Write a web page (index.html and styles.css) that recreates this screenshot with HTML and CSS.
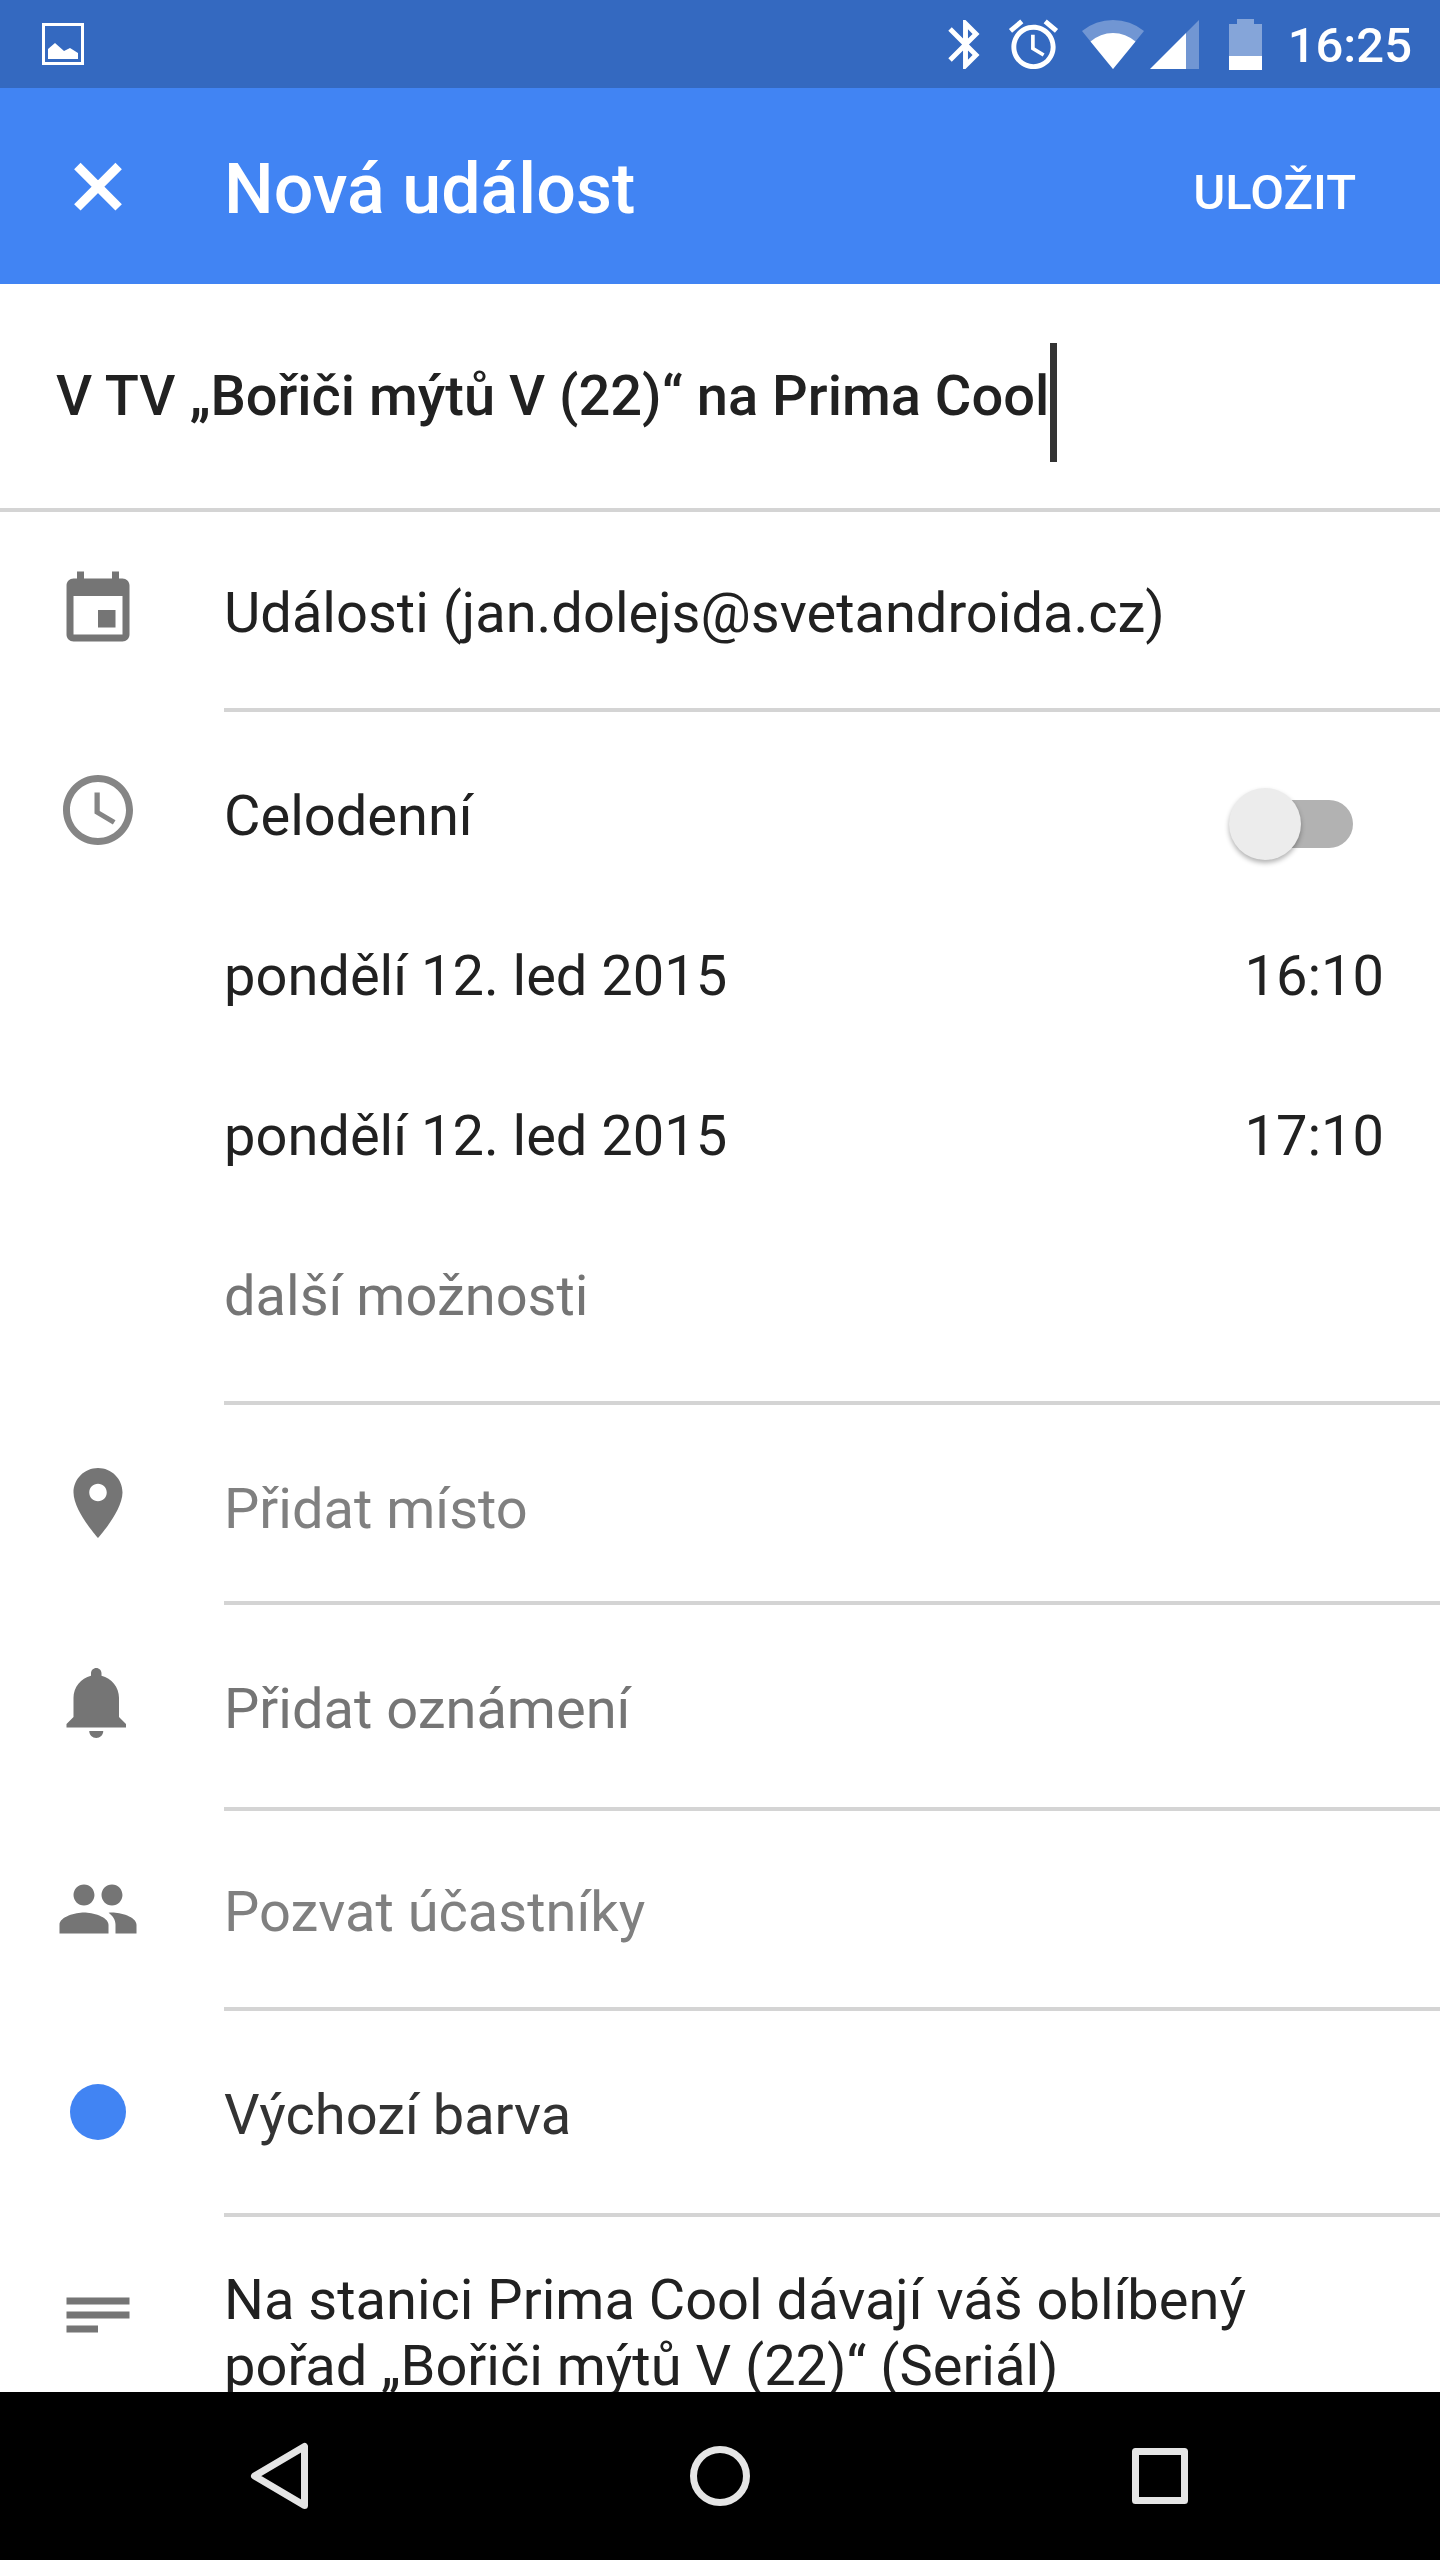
FILE: index.html
```html
<!DOCTYPE html>
<html lang="cs">
<head>
<meta charset="utf-8">
<meta name="viewport" content="width=device-width, initial-scale=1">
<title>Nová událost</title>
<link rel="stylesheet" href="styles.css">
</head>
<body>
<div class="status-bar">
  <svg class="status-picture" viewBox="0 0 42 42" aria-hidden="true"><rect x="1.5" y="1.5" width="39" height="39" fill="none" stroke="#fff" stroke-width="3"/><path fill="#fff" d="M6 26l7-6 9 8 6-3 8 5v6H6z"/></svg>
  <svg class="status-glyph" viewBox="0 0 24 24" aria-hidden="true"><path fill="#fff" d="M17.71 7.71L12 2h-1v7.59L6.41 5 5 6.41 10.59 12 5 17.59 6.41 19 11 14.41V22h1l5.71-5.71-4.3-4.29 4.3-4.29zM13 5.83l1.88 1.88L13 9.59V5.83zm1.88 10.46L13 18.17v-3.76l1.88 1.88z"/></svg>
  <svg class="status-glyph status-alarm" viewBox="0 0 24 24" aria-hidden="true"><path fill="#fff" d="M22 5.72l-4.6-3.86-1.29 1.53 4.6 3.86L22 5.72zM7.88 3.39L6.6 1.86 2 5.71l1.29 1.53 4.59-3.85zM12.5 8H11v6l4.75 2.85.75-1.23-4-2.37V8zM12 4c-4.97 0-9 4.03-9 9s4.02 9 9 9c4.97 0 9-4.03 9-9s-4.03-9-9-9zm0 16c-3.87 0-7-3.13-7-7s3.13-7 7-7 7 3.13 7 7-3.13 7-7 7z"/></svg>
  <svg class="status-wifi" viewBox="0 0 62 50" aria-hidden="true"><path fill="#fff" fill-opacity=".3" d="M31 50L0 12A49 49 0 0 1 62 12z"/><path fill="#fff" d="M31 50L8.500 22.500A34 34 0 0 1 53.500 22.500z"/></svg>
  <svg class="status-signal" viewBox="0 0 49 50" aria-hidden="true"><path fill="#fff" fill-opacity=".3" d="M36 14L49 1v49H36z"/><path fill="#fff" d="M0 50L36 14v36z"/></svg>
  <svg class="status-battery" viewBox="0 0 33 51" aria-hidden="true"><path fill="#fff" fill-opacity=".4" d="M0 5h8V0h17v5h8v32H0z"/><path fill="#fff" d="M0 37h33v14H0z"/></svg>
  <time class="status-time">16:25</time>
</div>

<header class="app-bar">
  <button class="close" type="button" aria-label="Zavřít"><svg class="icon" viewBox="0 0 24 24"><path stroke="#fff" stroke-width="2.6" d="M6.100 6.300l11.800 11.800M17.900 6.300L6.100 18.100"/></svg></button>
  <h1 class="app-title">Nová událost</h1>
  <button class="save" type="submit" form="event">ULOŽIT</button>
</header>

<form class="event" id="event">
  <div class="name-row">
    <input class="name" type="text" aria-label="Název události" value="V TV „Bořiči mýtů V (22)“ na Prima Cool" size="36">
    <span class="caret"></span>
  </div>

  <div class="row">
    <svg class="icon" viewBox="0 0 24 24" aria-hidden="true"><path d="M17 12h-5v5h5v-5zM16 1v2H8V1H6v2H5c-1.11 0-1.99.9-1.99 2L3 19c0 1.1.89 2 2 2h14c1.1 0 2-.9 2-2V5c0-1.1-.9-2-2-2h-1V1h-2zm3 18H5V8h14v11z"/></svg>
    <div class="cell"><button class="field" type="button">Události (jan.dolejs@svetandroida.cz)</button></div>
  </div>

  <div class="row">
    <svg class="icon icon-time" viewBox="0 0 24 24" aria-hidden="true"><path d="M12 2C6.480 2 2 6.480 2 12s4.480 10 10 10 10-4.480 10-10S17.520 2 12 2zm0 18c-4.420 0-8-3.580-8-8s3.580-8 8-8 8 3.580 8 8-3.580 8-8 8zM12.500 7H11v6l5.250 3.150.75-1.230-4.500-2.670z"/></svg>
    <div class="cell times">
      <div class="line"><label for="all-day">Celodenní</label><input class="switch" id="all-day" type="checkbox" role="switch"></div>
      <div class="line"><button class="field" type="button">pondělí 12. led 2015</button><button class="field hour" type="button">16:10</button></div>
      <div class="line"><button class="field" type="button">pondělí 12. led 2015</button><button class="field hour" type="button">17:10</button></div>
      <div class="line"><button class="field muted" type="button">další možnosti</button></div>
    </div>
  </div>

  <div class="row">
    <svg class="icon" viewBox="0 0 24 24" aria-hidden="true"><path d="M12 2C8.130 2 5 5.130 5 9c0 5.250 7 13 7 13s7-7.750 7-13c0-3.870-3.130-7-7-7zm0 9.500c-1.380 0-2.500-1.120-2.500-2.500s1.120-2.500 2.500-2.500 2.500 1.120 2.500 2.500-1.120 2.500-2.500 2.500z"/></svg>
    <div class="cell place"><input class="field" type="text" aria-label="Místo" placeholder="Přidat místo"></div>
  </div>

  <div class="row tall">
    <svg class="icon" viewBox="0 0 24 24" aria-hidden="true"><path d="M11.500 22c1.100 0 2-.9 2-2h-4c0 1.100.9 2 2 2zm6.500-6v-5.500c0-3.070-2.130-5.640-5-6.320V3.500c0-.83-.67-1.500-1.500-1.500S10 2.670 10 3.500v.68c-2.870.68-5 3.250-5 6.320V16l-2 2v1h17v-1l-2-2z"/></svg>
    <div class="cell"><button class="field muted" type="button">Přidat oznámení</button></div>
  </div>

  <div class="row">
    <svg class="icon" viewBox="0 0 24 24" aria-hidden="true"><path d="M16 11c1.660 0 2.990-1.340 2.990-3S17.660 5 16 5c-1.660 0-3 1.340-3 3s1.340 3 3 3zm-8 0c1.660 0 2.990-1.340 2.990-3S9.660 5 8 5C6.340 5 5 6.340 5 8s1.340 3 3 3zm0 2c-2.330 0-7 1.170-7 3.500V19h14v-2.500c0-2.330-4.670-3.500-7-3.500zm8 0c-.29 0-.62.02-.97.05 1.160.84 1.970 1.970 1.970 3.450V19h6v-2.500c0-2.330-4.670-3.500-7-3.500z"/></svg>
    <div class="cell"><input class="field" type="text" aria-label="Účastníci" placeholder="Pozvat účastníky"></div>
  </div>

  <div class="row tall">
    <span class="swatch"></span>
    <div class="cell"><button class="field color-name" type="button">Výchozí barva</button></div>
  </div>

  <div class="row">
    <svg class="icon" viewBox="0 0 24 24" aria-hidden="true"><path d="M3 7h18v2H3zM3 11h18v2H3zM3 15h9v2H3z"/></svg>
    <div class="cell notes"><textarea class="field" rows="2" aria-label="Popis">Na stanici Prima Cool dávají váš oblíbený pořad „Bořiči mýtů V (22)“ (Seriál)</textarea></div>
  </div>
</form>

<nav class="nav-bar">
  <button type="button" aria-label="Zpět"><svg viewBox="0 0 84 84"><path d="M66.500 12.500v59L16.500 42z"/></svg></button>
  <button type="button" aria-label="Domů"><svg viewBox="0 0 84 84"><circle cx="42" cy="42" r="26.500"/></svg></button>
  <button type="button" aria-label="Přehled"><svg viewBox="0 0 84 84"><rect x="17.500" y="17.500" width="49" height="49"/></svg></button>
</nav>
</body>
</html>
```
FILE: styles.css
```css
* {
  box-sizing: border-box;
}

body {
  display: flex;
  flex-direction: column;
  height: 100vh;
  margin: 0;
  background: #fff;
  color: #212121;
  font: 400 56px/66px Roboto, sans-serif;
}

button,
input,
textarea {
  margin: 0;
  padding: 0;
  border: 0;
  outline: 0;
  background: none;
  color: inherit;
  font: inherit;
  text-align: left;
}

svg {
  display: block;
  flex: none;
}

/* System status bar */
.status-bar {
  display: flex;
  flex: none;
  align-items: center;
  height: 88px;
  padding: 0 28px 0 42px;
  background: #3469c0;
  color: #fff;
}

.status-picture {
  width: 42px;
  height: 42px;
  margin-right: auto;
}

.status-glyph {
  width: 59px;
  height: 59px;
}

.status-alarm {
  margin-left: 9px;
}

.status-wifi {
  width: 62px;
  height: 50px;
  margin-left: 19px;
}

.status-signal {
  width: 49px;
  height: 50px;
  margin-left: 6px;
}

.status-battery {
  width: 33px;
  height: 51px;
  margin: 0 26px 0 30px;
}

.status-time {
  padding-top: 4px;
  font-size: 49px;
  font-weight: 500;
  line-height: 58px;
}

/* Title bar */
.app-bar {
  display: flex;
  flex: none;
  align-items: center;
  height: 196px;
  padding: 0 84px 0 56px;
  background: #4184f3;
  color: #fff;
}

.app-title {
  flex: 1;
  margin: 0;
  padding: 6px 0 0 84px;
  font-size: 70px;
  font-weight: 500;
  line-height: 82px;
}

.save {
  padding-top: 14px;
  font-size: 49px;
  font-weight: 500;
  line-height: 58px;
}

.icon {
  width: 84px;
  height: 84px;
  fill: #757575;
}

.icon-time {
  fill: #858585;
}

/* Event form */
.event {
  flex: 1;
  min-height: 0;
  overflow: auto;
  scrollbar-width: none;
}

.name-row {
  display: flex;
  align-items: center;
  height: 228px;
  padding: 0 56px;
  border-bottom: 4px solid #d4d4d4;
}

.name {
  min-width: 0;
  font-weight: 500;
  field-sizing: content;
}

.caret {
  width: 7px;
  height: 119px;
  margin: 13px 0 0 1px;
  background: #333;
}

.row {
  display: flex;
}

.row > .icon {
  margin: 56px 84px 0 56px;
}

.cell {
  flex: 1;
  min-width: 0;
  padding: 68px 56px 62px 0;
  border-bottom: 4px solid #d4d4d4;
}

.tall > .cell {
  padding: 71px 56px 65px 0;
}

.row > .place {
  padding: 71px 56px 59px 0;
}

.field {
  display: block;
  height: 66px;
}

input.field,
textarea.field {
  width: 100%;
}

.field::placeholder {
  color: #808080;
  opacity: 1;
}

.muted {
  color: #757575;
}

.color-name {
  color: #333;
}

.row > .times {
  padding: 24px 56px 25px 0;
}

.line {
  display: flex;
  align-items: center;
  justify-content: space-between;
  height: 160px;
}

.switch {
  display: flex;
  align-items: center;
  appearance: none;
  width: 124px;
  height: 72px;
  margin: 16px 31px 0 0;
}

/* Thumb */
.switch::before {
  content: "";
  flex: none;
  width: 72px;
  height: 72px;
  border-radius: 50%;
  background: #ececec;
  box-shadow: 0 3px 5px rgba(0, 0, 0, .3);
  z-index: 1;
}

/* Track */
.switch::after {
  content: "";
  flex: none;
  width: 100px;
  height: 48px;
  margin-left: -48px;
  border-radius: 24px;
  background: #b2b2b2;
}

.switch:checked {
  flex-direction: row-reverse;
}

.switch:checked::before {
  background: #4184f3;
}

.switch:checked::after {
  margin: 0 -48px 0 0;
}

.swatch {
  flex: none;
  width: 56px;
  height: 56px;
  margin: 73px 98px 0 70px;
  border-radius: 50%;
  background: #4184f3;
}

.row > .notes {
  padding: 50px 56px 50px 0;
}

textarea.field {
  height: auto;
  overflow: hidden;
  resize: none;
}

/* System navigation */
.nav-bar {
  display: flex;
  flex: none;
  height: 168px;
  padding: 0 60px;
  background: #000;
}

.nav-bar button {
  display: flex;
  flex: 1;
  align-items: center;
  justify-content: center;
}

.nav-bar svg {
  width: 84px;
  height: 84px;
  fill: none;
  stroke: #e5e5e5;
  stroke-width: 7;
  stroke-linejoin: round;
}
```
